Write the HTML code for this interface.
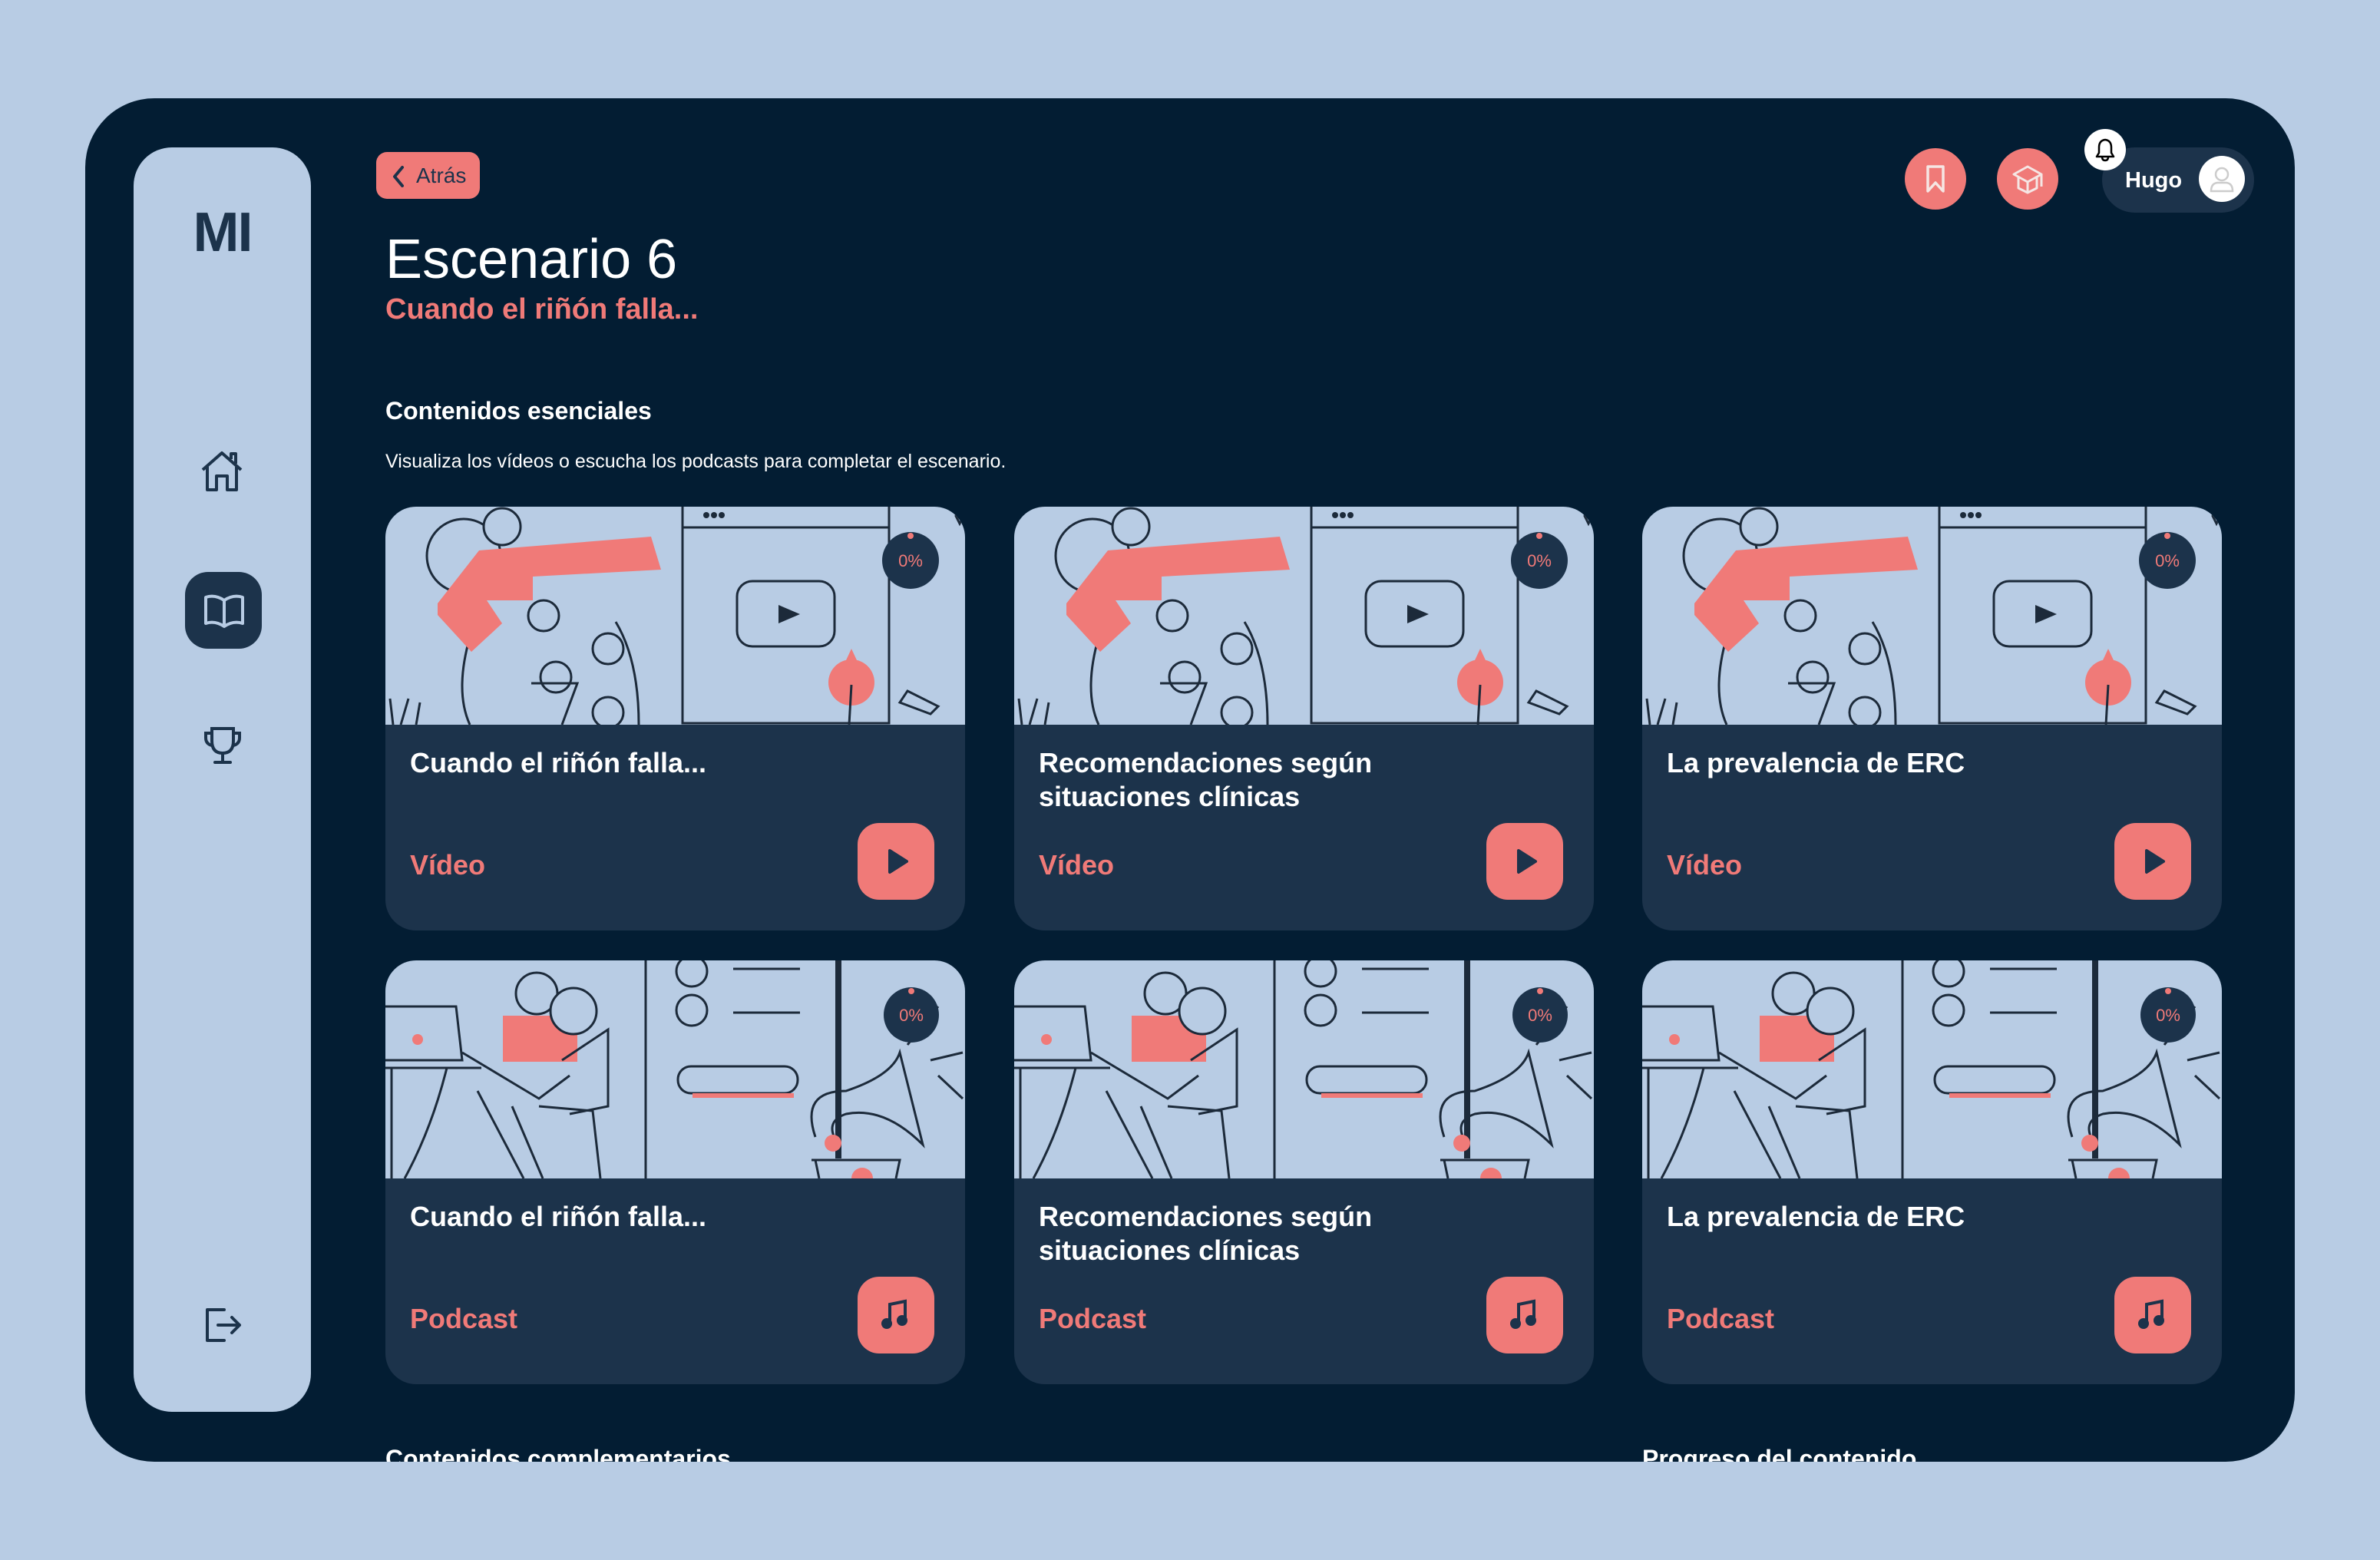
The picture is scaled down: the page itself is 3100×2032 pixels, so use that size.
<!DOCTYPE html>
<html><head><meta charset="utf-8"><style>
*{margin:0;padding:0;box-sizing:border-box}
body{width:3100px;height:2032px;background:#b8cce4;font-family:"Liberation Sans",sans-serif;position:relative;overflow:hidden}
.panel{position:absolute;left:111px;top:128px;width:2878px;height:1776px;background:#031d33;border-radius:90px;overflow:hidden}
.side{position:absolute;left:63px;top:64px;width:231px;height:1647px;background:#b8cce4;border-radius:50px}
.abs{position:absolute}
.card{position:absolute;width:755px;height:552px;border-radius:40px;overflow:hidden;background:#1c334b}
.card svg.ill{position:absolute;left:0;top:0}
.ct{position:absolute;left:32px;top:312px;color:#fff;font-weight:bold;font-size:36px;line-height:44px}
.cl{position:absolute;left:32px;top:445px;color:#f07a78;font-weight:bold;font-size:36px;line-height:44px}
.btn{position:absolute;left:615px;top:412px;width:100px;height:100px;border-radius:28px;background:#f07a78}
.btn svg{position:absolute;left:0;top:0}
</style></head><body>
<div class="panel">
 <div class="side">
  <div class="abs" style="left:0;width:231px;top:70px;text-align:center;font-size:72px;font-weight:bold;color:#1c334b;letter-spacing:-2px">MI</div>
  <svg class="abs" style="left:86px;top:394px" width="58" height="58" viewBox="0 0 58 58" fill="none" stroke="#1c334b" stroke-width="4" stroke-linejoin="round"><path d="M4 26 L29 4 L54 26"/><path d="M10 22 V52 H22 V34 H36 V52 H48 V22"/><path d="M41 12 V5 H47 V18"/></svg>
  <div class="abs" style="left:67px;top:553px;width:100px;height:100px;border-radius:30px;background:#1c334b"></div>
  <svg class="abs" style="left:90px;top:576px" width="56" height="56" viewBox="0 0 56 56" fill="none" stroke="#b8cce4" stroke-width="4" stroke-linejoin="round"><path d="M4 10 Q16 6 28 14 Q40 6 52 10 V44 Q40 40 28 48 Q16 40 4 44 Z"/><path d="M28 14 V46"/></svg>
  <svg class="abs" style="left:88px;top:751px" width="56" height="56" viewBox="0 0 56 56" fill="none" stroke="#1c334b" stroke-width="4" stroke-linecap="round"><path d="M14 6 H42 V22 Q42 38 28 38 Q14 38 14 22 Z"/><path d="M14 12 H6 V18 Q6 26 14 28"/><path d="M42 12 H50 V18 Q50 26 42 28"/><path d="M28 38 V50 M18 50 H38"/></svg>
  <svg class="abs" style="left:88px;top:1506px" width="56" height="56" viewBox="0 0 56 56" fill="none" stroke="#1c334b" stroke-width="4" stroke-linecap="round" stroke-linejoin="round"><path d="M30 8 H8 V48 H30"/><path d="M22 28 H50 M40 18 L50 28 L40 38"/></svg>
 </div>
 <div class="abs" style="left:379px;top:70px;width:135px;height:61px;background:#f07a78;border-radius:14px;color:#1c334b;font-size:28px;line-height:61px;padding-left:52px">Atrás</div>
 <svg class="abs" style="left:397px;top:86px" width="24" height="32" viewBox="0 0 24 32" fill="none" stroke="#1c334b" stroke-width="4" stroke-linecap="round" stroke-linejoin="round"><path d="M16 4 L6 16 L16 28"/></svg>
 <div class="abs" style="left:391px;top:168px;color:#fff;font-size:72px;line-height:84px">Escenario 6</div>
 <div class="abs" style="left:391px;top:252px;color:#f07a78;font-size:38px;font-weight:bold;line-height:46px">Cuando el riñón falla...</div>
 <div class="abs" style="left:391px;top:387px;color:#fff;font-size:32px;font-weight:bold;line-height:40px">Contenidos esenciales</div>
 <div class="abs" style="left:391px;top:458px;color:#fff;font-size:25px;line-height:30px">Visualiza los vídeos o escucha los podcasts para completar el escenario.</div>

 <div class="abs" style="left:2370px;top:65px;width:80px;height:80px;border-radius:50%;background:#f07a78"></div>
 <svg class="abs" style="left:2390px;top:85px" width="40" height="40" viewBox="0 0 40 40" fill="none" stroke="#f5e6e4" stroke-width="3.5" stroke-linejoin="round"><path d="M10 4 H30 V36 L20 25 L10 36 Z"/></svg>
 <div class="abs" style="left:2490px;top:65px;width:80px;height:80px;border-radius:50%;background:#f07a78"></div>
 <svg class="abs" style="left:2508px;top:83px" width="44" height="44" viewBox="0 0 44 44" fill="none" stroke="#f5e6e4" stroke-width="3" stroke-linejoin="round"><path d="M4 16 L22 6 L40 16 L22 26 Z"/><path d="M10 20 V34 L22 40 L34 34 V20"/><path d="M22 26 V40"/><path d="M40 16 V32"/></svg>
 <div class="abs" style="left:2627px;top:64px;width:198px;height:85px;border-radius:43px;background:#1c334b"></div>
 <div class="abs" style="left:2657px;top:87px;color:#fff;font-weight:bold;font-size:29px;line-height:40px">Hugo</div>
 <div class="abs" style="left:2753px;top:75px;width:60px;height:60px;border-radius:50%;background:#fff"></div>
 <svg class="abs" style="left:2763px;top:85px" width="40" height="40" viewBox="0 0 40 40" fill="none" stroke="#ccc" stroke-width="2.5"><circle cx="20" cy="14" r="8"/><path d="M6 36 Q6 26 14 25 H26 Q34 26 34 36 Z"/></svg>
 <div class="abs" style="left:2604px;top:40px;width:54px;height:54px;border-radius:50%;background:#fff"></div>
 <svg class="abs" style="left:2617px;top:51px" width="28" height="32" viewBox="0 0 28 32" fill="none" stroke="#000" stroke-width="2.5" stroke-linejoin="round"><path d="M14 3 Q6 4 6 13 V20 L3 25 H25 L22 20 V13 Q22 4 14 3 Z"/><path d="M10 25 Q10 30 14 30 Q18 30 18 25"/></svg>

 <div class="abs" style="left:391px;top:1754px;color:#fff;font-size:32px;font-weight:bold">Contenidos complementarios</div>
 <div class="abs" style="left:2028px;top:1754px;color:#fff;font-size:32px;font-weight:bold">Progreso del contenido</div>

<div class="card" style="left:391px;top:532px">
<svg class="ill" width="755" height="284" viewBox="0 0 755 284"><rect width="755" height="284" fill="#b8cce4"/><g fill="none" stroke="#1c2a3a" stroke-width="3"><circle cx="102" cy="64" r="48"/><path d="M387 -2 V282 H656 V-2 M387 27 H656"/><rect x="458" y="97" width="127" height="85" rx="20"/><circle cx="206" cy="142" r="20"/><circle cx="290" cy="185" r="20"/><circle cx="222" cy="222" r="20"/><circle cx="290" cy="268" r="20"/><path d="M110 170 Q90 240 110 284 M300 150 Q330 200 330 284"/><path d="M190 230 L250 230 L230 284 M10 284 L6 250 M20 284 L30 250 M40 284 L45 255 M680 240 L720 260 L710 270 L670 255 Z"/><path d="M743 12 L748 2 L753 12 L748 22 Z"/></g><path d="M68 126 L122 57 L346 39 L359 82 L192 91 L192 122 L132 122 L152 152 L112 189 L68 141 Z" fill="#f07a78"/><circle cx="152" cy="26" r="24" fill="#b8cce4" stroke="#1c2a3a" stroke-width="3"/><circle cx="607" cy="229" r="30" fill="#f07a78"/><path d="M600 200 L607 185 L614 200 Z" fill="#f07a78"/><path d="M607 232 L604 284" stroke="#1c2a3a" stroke-width="3"/><circle cx="418" cy="11" r="4" fill="#1c2a3a"/><circle cx="428" cy="11" r="4" fill="#1c2a3a"/><circle cx="438" cy="11" r="4" fill="#1c2a3a"/><path d="M512 128 L540 140 L512 152 Z" fill="#1c2a3a"/><circle cx="684" cy="70" r="37" fill="#1c334b"/><circle cx="684" cy="38" r="4" fill="#f07a78"/><text x="684" y="78" font-size="22" fill="#f07a78" text-anchor="middle" font-family="Liberation Sans">0%</text></svg>
<div class="ct">Cuando el riñón falla...</div><div class="cl">Vídeo</div>
<div class="btn"><svg width="100" height="100"><path d="M42 36 L64 50 L42 64 Z" fill="#1c334b" stroke="#1c334b" stroke-width="4" stroke-linejoin="round"/></svg></div></div>

<div class="card" style="left:1210px;top:532px">
<svg class="ill" width="755" height="284" viewBox="0 0 755 284"><rect width="755" height="284" fill="#b8cce4"/><g fill="none" stroke="#1c2a3a" stroke-width="3"><circle cx="102" cy="64" r="48"/><path d="M387 -2 V282 H656 V-2 M387 27 H656"/><rect x="458" y="97" width="127" height="85" rx="20"/><circle cx="206" cy="142" r="20"/><circle cx="290" cy="185" r="20"/><circle cx="222" cy="222" r="20"/><circle cx="290" cy="268" r="20"/><path d="M110 170 Q90 240 110 284 M300 150 Q330 200 330 284"/><path d="M190 230 L250 230 L230 284 M10 284 L6 250 M20 284 L30 250 M40 284 L45 255 M680 240 L720 260 L710 270 L670 255 Z"/><path d="M743 12 L748 2 L753 12 L748 22 Z"/></g><path d="M68 126 L122 57 L346 39 L359 82 L192 91 L192 122 L132 122 L152 152 L112 189 L68 141 Z" fill="#f07a78"/><circle cx="152" cy="26" r="24" fill="#b8cce4" stroke="#1c2a3a" stroke-width="3"/><circle cx="607" cy="229" r="30" fill="#f07a78"/><path d="M600 200 L607 185 L614 200 Z" fill="#f07a78"/><path d="M607 232 L604 284" stroke="#1c2a3a" stroke-width="3"/><circle cx="418" cy="11" r="4" fill="#1c2a3a"/><circle cx="428" cy="11" r="4" fill="#1c2a3a"/><circle cx="438" cy="11" r="4" fill="#1c2a3a"/><path d="M512 128 L540 140 L512 152 Z" fill="#1c2a3a"/><circle cx="684" cy="70" r="37" fill="#1c334b"/><circle cx="684" cy="38" r="4" fill="#f07a78"/><text x="684" y="78" font-size="22" fill="#f07a78" text-anchor="middle" font-family="Liberation Sans">0%</text></svg>
<div class="ct">Recomendaciones según<br>situaciones clínicas</div><div class="cl">Vídeo</div>
<div class="btn"><svg width="100" height="100"><path d="M42 36 L64 50 L42 64 Z" fill="#1c334b" stroke="#1c334b" stroke-width="4" stroke-linejoin="round"/></svg></div></div>

<div class="card" style="left:2028px;top:532px">
<svg class="ill" width="755" height="284" viewBox="0 0 755 284"><rect width="755" height="284" fill="#b8cce4"/><g fill="none" stroke="#1c2a3a" stroke-width="3"><circle cx="102" cy="64" r="48"/><path d="M387 -2 V282 H656 V-2 M387 27 H656"/><rect x="458" y="97" width="127" height="85" rx="20"/><circle cx="206" cy="142" r="20"/><circle cx="290" cy="185" r="20"/><circle cx="222" cy="222" r="20"/><circle cx="290" cy="268" r="20"/><path d="M110 170 Q90 240 110 284 M300 150 Q330 200 330 284"/><path d="M190 230 L250 230 L230 284 M10 284 L6 250 M20 284 L30 250 M40 284 L45 255 M680 240 L720 260 L710 270 L670 255 Z"/><path d="M743 12 L748 2 L753 12 L748 22 Z"/></g><path d="M68 126 L122 57 L346 39 L359 82 L192 91 L192 122 L132 122 L152 152 L112 189 L68 141 Z" fill="#f07a78"/><circle cx="152" cy="26" r="24" fill="#b8cce4" stroke="#1c2a3a" stroke-width="3"/><circle cx="607" cy="229" r="30" fill="#f07a78"/><path d="M600 200 L607 185 L614 200 Z" fill="#f07a78"/><path d="M607 232 L604 284" stroke="#1c2a3a" stroke-width="3"/><circle cx="418" cy="11" r="4" fill="#1c2a3a"/><circle cx="428" cy="11" r="4" fill="#1c2a3a"/><circle cx="438" cy="11" r="4" fill="#1c2a3a"/><path d="M512 128 L540 140 L512 152 Z" fill="#1c2a3a"/><circle cx="684" cy="70" r="37" fill="#1c334b"/><circle cx="684" cy="38" r="4" fill="#f07a78"/><text x="684" y="78" font-size="22" fill="#f07a78" text-anchor="middle" font-family="Liberation Sans">0%</text></svg>
<div class="ct">La prevalencia de ERC</div><div class="cl">Vídeo</div>
<div class="btn"><svg width="100" height="100"><path d="M42 36 L64 50 L42 64 Z" fill="#1c334b" stroke="#1c334b" stroke-width="4" stroke-linejoin="round"/></svg></div></div>

<div class="card" style="left:391px;top:1123px">
<svg class="ill" width="755" height="284" viewBox="0 0 755 284"><rect width="755" height="284" fill="#b8cce4"/><path d="M153 72 L250 72 L250 132 L153 132 Z" fill="#f07a78"/><g fill="none" stroke="#1c2a3a" stroke-width="3"><path d="M339 0 V284"/><circle cx="399" cy="14" r="20"/><circle cx="399" cy="65" r="20"/><path d="M453 11 H540 M453 68 H540"/><rect x="381" y="138" width="156" height="35" rx="17"/><path d="M0 60 H92 L100 130 H0 M0 140 H125 M8 140 V284"/><path d="M80 140 Q60 220 25 284 M120 170 L180 284 M165 190 L205 284 M100 120 L200 180 L240 150 M230 130 L290 90 L290 190 L240 200 M200 190 L270 196 L280 284"/><path d="M560 230 Q540 170 600 170 Q660 150 670 120 L700 240 Q650 190 600 200 Q570 210 590 240 M680 110 L720 60 M710 130 L752 120 M720 150 L752 180 M555 260 H670 L665 284 M560 260 L565 284"/></g><rect x="586" y="0" width="8" height="258" fill="#1c2a3a"/><circle cx="197" cy="43" r="27" fill="#b8cce4" stroke="#1c2a3a" stroke-width="3"/><circle cx="245" cy="66" r="30" fill="#b8cce4" stroke="#1c2a3a" stroke-width="3"/><circle cx="42" cy="103" r="7" fill="#f07a78"/><path d="M400 176 H532" stroke="#f07a78" stroke-width="6"/><circle cx="583" cy="238" r="11" fill="#f07a78"/><circle cx="621" cy="284" r="14" fill="#f07a78"/><circle cx="685" cy="71" r="36" fill="#1c334b"/><circle cx="685" cy="40" r="4" fill="#f07a78"/><text x="685" y="79" font-size="22" fill="#f07a78" text-anchor="middle" font-family="Liberation Sans">0%</text></svg>
<div class="ct">Cuando el riñón falla...</div><div class="cl">Podcast</div>
<div class="btn"><svg width="100" height="100" fill="none" stroke="#1c334b" stroke-width="4"><path d="M42 60 V36 L62 32 V56"/><circle cx="38" cy="61" r="5" fill="#1c334b"/><circle cx="58" cy="57" r="5" fill="#1c334b"/></svg></div></div>

<div class="card" style="left:1210px;top:1123px">
<svg class="ill" width="755" height="284" viewBox="0 0 755 284"><rect width="755" height="284" fill="#b8cce4"/><path d="M153 72 L250 72 L250 132 L153 132 Z" fill="#f07a78"/><g fill="none" stroke="#1c2a3a" stroke-width="3"><path d="M339 0 V284"/><circle cx="399" cy="14" r="20"/><circle cx="399" cy="65" r="20"/><path d="M453 11 H540 M453 68 H540"/><rect x="381" y="138" width="156" height="35" rx="17"/><path d="M0 60 H92 L100 130 H0 M0 140 H125 M8 140 V284"/><path d="M80 140 Q60 220 25 284 M120 170 L180 284 M165 190 L205 284 M100 120 L200 180 L240 150 M230 130 L290 90 L290 190 L240 200 M200 190 L270 196 L280 284"/><path d="M560 230 Q540 170 600 170 Q660 150 670 120 L700 240 Q650 190 600 200 Q570 210 590 240 M680 110 L720 60 M710 130 L752 120 M720 150 L752 180 M555 260 H670 L665 284 M560 260 L565 284"/></g><rect x="586" y="0" width="8" height="258" fill="#1c2a3a"/><circle cx="197" cy="43" r="27" fill="#b8cce4" stroke="#1c2a3a" stroke-width="3"/><circle cx="245" cy="66" r="30" fill="#b8cce4" stroke="#1c2a3a" stroke-width="3"/><circle cx="42" cy="103" r="7" fill="#f07a78"/><path d="M400 176 H532" stroke="#f07a78" stroke-width="6"/><circle cx="583" cy="238" r="11" fill="#f07a78"/><circle cx="621" cy="284" r="14" fill="#f07a78"/><circle cx="685" cy="71" r="36" fill="#1c334b"/><circle cx="685" cy="40" r="4" fill="#f07a78"/><text x="685" y="79" font-size="22" fill="#f07a78" text-anchor="middle" font-family="Liberation Sans">0%</text></svg>
<div class="ct">Recomendaciones según<br>situaciones clínicas</div><div class="cl">Podcast</div>
<div class="btn"><svg width="100" height="100" fill="none" stroke="#1c334b" stroke-width="4"><path d="M42 60 V36 L62 32 V56"/><circle cx="38" cy="61" r="5" fill="#1c334b"/><circle cx="58" cy="57" r="5" fill="#1c334b"/></svg></div></div>

<div class="card" style="left:2028px;top:1123px">
<svg class="ill" width="755" height="284" viewBox="0 0 755 284"><rect width="755" height="284" fill="#b8cce4"/><path d="M153 72 L250 72 L250 132 L153 132 Z" fill="#f07a78"/><g fill="none" stroke="#1c2a3a" stroke-width="3"><path d="M339 0 V284"/><circle cx="399" cy="14" r="20"/><circle cx="399" cy="65" r="20"/><path d="M453 11 H540 M453 68 H540"/><rect x="381" y="138" width="156" height="35" rx="17"/><path d="M0 60 H92 L100 130 H0 M0 140 H125 M8 140 V284"/><path d="M80 140 Q60 220 25 284 M120 170 L180 284 M165 190 L205 284 M100 120 L200 180 L240 150 M230 130 L290 90 L290 190 L240 200 M200 190 L270 196 L280 284"/><path d="M560 230 Q540 170 600 170 Q660 150 670 120 L700 240 Q650 190 600 200 Q570 210 590 240 M680 110 L720 60 M710 130 L752 120 M720 150 L752 180 M555 260 H670 L665 284 M560 260 L565 284"/></g><rect x="586" y="0" width="8" height="258" fill="#1c2a3a"/><circle cx="197" cy="43" r="27" fill="#b8cce4" stroke="#1c2a3a" stroke-width="3"/><circle cx="245" cy="66" r="30" fill="#b8cce4" stroke="#1c2a3a" stroke-width="3"/><circle cx="42" cy="103" r="7" fill="#f07a78"/><path d="M400 176 H532" stroke="#f07a78" stroke-width="6"/><circle cx="583" cy="238" r="11" fill="#f07a78"/><circle cx="621" cy="284" r="14" fill="#f07a78"/><circle cx="685" cy="71" r="36" fill="#1c334b"/><circle cx="685" cy="40" r="4" fill="#f07a78"/><text x="685" y="79" font-size="22" fill="#f07a78" text-anchor="middle" font-family="Liberation Sans">0%</text></svg>
<div class="ct">La prevalencia de ERC</div><div class="cl">Podcast</div>
<div class="btn"><svg width="100" height="100" fill="none" stroke="#1c334b" stroke-width="4"><path d="M42 60 V36 L62 32 V56"/><circle cx="38" cy="61" r="5" fill="#1c334b"/><circle cx="58" cy="57" r="5" fill="#1c334b"/></svg></div></div>
</div>
</body></html>
